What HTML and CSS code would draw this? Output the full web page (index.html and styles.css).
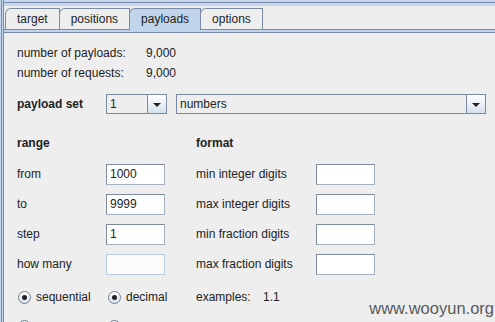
FILE: index.html
```html
<!DOCTYPE html>
<html lang="en">

<head>
  <meta charset="UTF-8">
  <title>Intruder - payloads</title>
  <link rel="stylesheet" href="styles.css">
</head>

<body>
  <div class="window">
    <div class="topstrip"></div>

    <!-- tab header -->
    <div class="tabs">
      <div class="tab">target</div>
      <div class="tab">positions</div>
      <div class="tab active">payloads</div>
      <div class="tab">options</div>
    </div>
    <div class="tabline"></div>

    <div class="panel">
      <div class="stats">
        <span>number of payloads:</span><span>9,000</span>
        <span>number of requests:</span><span>9,000</span>
      </div>

      <div class="setrow">
        <b class="setlabel">payload set</b>
        <div class="combo small"><span>1</span><i class="arrow"></i></div>
        <div class="combo wide"><span>numbers</span><i class="arrow"></i></div>
      </div>

      <!-- range / format -->
      <div class="grid">
        <b class="head">range</b>
        <b class="head fmt">format</b>

        <span class="c1">from</span>
        <input class="field c2" type="text" value="1000">
        <span class="c4">min integer digits</span>
        <input class="field c5" type="text">

        <span class="c1">to</span>
        <input class="field c2" type="text" value="9999">
        <span class="c4">max integer digits</span>
        <input class="field c5" type="text">

        <span class="c1">step</span>
        <input class="field c2" type="text" value="1">
        <span class="c4">min fraction digits</span>
        <input class="field c5" type="text">

        <span class="c1">how many</span>
        <input class="field c2 disabled" type="text" disabled>
        <span class="c4">max fraction digits</span>
        <input class="field c5" type="text">

        <label class="opt c1"><i class="radio on"></i>sequential</label>
        <label class="opt c2 span"><i class="radio on"></i>decimal</label>
        <span class="c4 examples"><span class="exlabel">examples:</span>1.1</span>

        <!-- next row is cut off by the window edge, only the radios peek in -->
        <label class="opt c1"><i class="radio"></i></label>
        <label class="opt c2 span"><i class="radio"></i></label>
      </div>
    </div>

    <div class="watermark">www.wooyun.org</div>
  </div>
</body>

</html>
```

FILE: styles.css
```css
body {
  margin: 0;
  width: 495px;
  height: 322px;
  overflow: hidden;
  background: #eeeeee;
  font-family: "Liberation Sans", Arial, sans-serif;
  font-size: 12px;
  color: #222;
}

.window {
  position: relative;
  height: 322px;
  padding-left: 4px;
  box-sizing: border-box;
  background: linear-gradient(to right, #c6d8ee 0 1px, #7a8aa5 1px 2px, #c6d8ee 2px 3px, #7a8aa5 3px 4px, #eeeeee 4px);
}

.topstrip {
  height: 6px;
  background: linear-gradient(#c6d8ee 0 2px, #7a8aa5 2px 3px, #c6d8ee 3px 6px, #eeeeee 6px);
}

/* tabs */
.tabs {
  display: flex;
  align-items: flex-start;
  height: 21px;
  margin-top: 2px;
  padding-left: 1px;
}

.tab {
  padding: 0 11px 0 11px;
  line-height: 20px;
  border: 1px solid #7a8aa5;
  border-bottom: none;
  border-top-left-radius: 6px;
  margin-right: -1px;
  background: #eeeeee;
}

.tab.active {
  position: relative;
  z-index: 1;
  padding-bottom: 1px;
  background: #c0d4ea;
}

.tabline {
  height: 4px;
  background: linear-gradient(#7a8aa5 0 1px, #c0d4ea 1px 3px, #7a8aa5 3px 4px);
}

/* panel */
.panel {
  padding: 10px 0 0 13px;
}

.stats {
  display: grid;
  grid-template-columns: 129px auto;
  line-height: 20px;
}

.setrow {
  display: flex;
  align-items: center;
  height: 20px;
  margin-top: 11px;
}

.setlabel {
  width: 89px;
}

.combo {
  display: flex;
  height: 20px;
  box-sizing: border-box;
  border: 1px solid #7a8aa5;
  background: #eeeeee;
}

.combo span {
  flex: 1;
  padding-left: 3px;
  line-height: 18px;
}

.combo.small {
  width: 61px;
}

.combo.wide {
  width: 310px;
  margin-left: 9px;
}

.arrow {
  display: flex;
  align-items: center;
  justify-content: center;
  width: 18px;
  border-left: 1px solid #7a8aa5;
  background: linear-gradient(#ffffff, #d5e1ee);
}

.arrow::after {
  content: "";
  border-left: 4px solid transparent;
  border-right: 4px solid transparent;
  border-top: 4px solid #222;
  margin-top: 1px;
}

/* range / format grid */
.grid {
  display: grid;
  grid-template-columns: 89px 59px 31px 120px 59px;
  grid-template-rows: 26px repeat(4, 30px) 36px 22px;
  align-items: center;
  margin-top: 19px;
}

.head {
  align-self: start;
  line-height: 20px;
  grid-column: 1;
}

.head.fmt {
  grid-column: 4;
}

.c1 { grid-column: 1; }
.c2 { grid-column: 2; }
.c4 { grid-column: 4; }
.c5 { grid-column: 5; }

.span {
  grid-column: 2 / 4;
}

.field {
  width: 59px;
  height: 21px;
  box-sizing: border-box;
  margin: 0;
  padding: 0 3px;
  border: 1px solid #7d8b9a;
  border-right-color: #a5b1bd;
  border-bottom-color: #a5b1bd;
  background: #ffffff;
  font: inherit;
  color: #222;
  outline: none;
}

.field.disabled {
  border-color: #bccde0;
  background: #fbfbfb;
}

.opt {
  display: flex;
  align-items: center;
  white-space: nowrap;
  gap: 5px;
}

.opt.c1 .radio {
  margin-left: 1px;
}

.opt.c2 .radio {
  margin-left: 2px;
}

.radio {
  display: flex;
  align-items: center;
  justify-content: center;
  width: 13px;
  height: 13px;
  box-sizing: border-box;
  border: 1px solid #6f7d8c;
  border-radius: 50%;
  background: linear-gradient(#ffffff, #d5e1ee);
}

.radio.on::after {
  content: "";
  width: 5px;
  height: 5px;
  border-radius: 50%;
  background: #222;
}

.exlabel {
  display: inline-block;
  width: 67px;
}

.watermark {
  position: absolute;
  top: 300px;
  right: 1px;
  font-size: 16.5px;
  line-height: 1;
  color: #5a5a5a;
}
```
